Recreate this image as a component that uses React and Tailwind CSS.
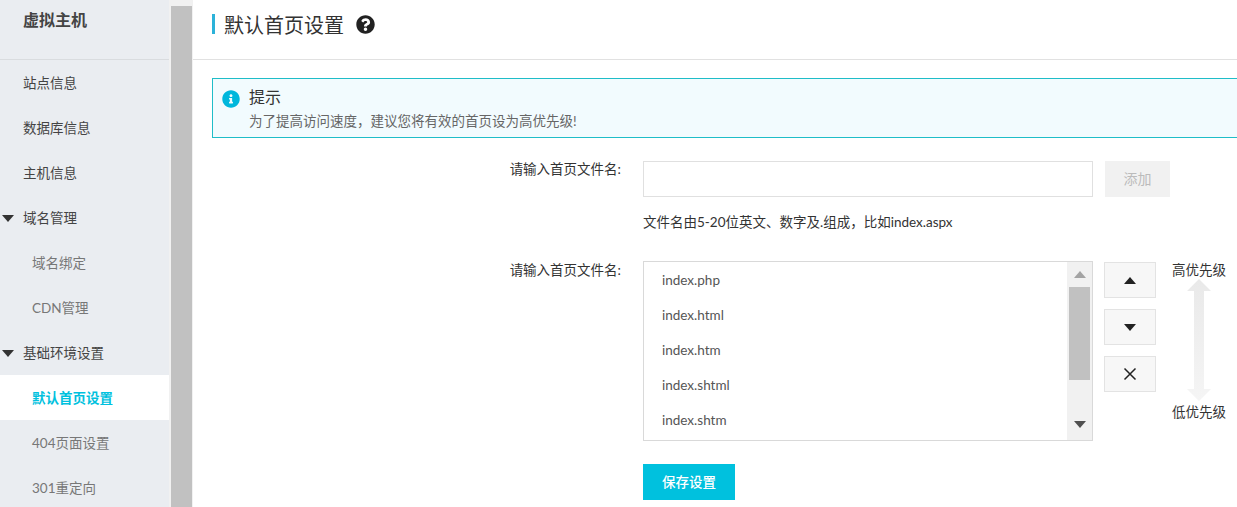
import React from "react";
import { FaInfoCircle, FaQuestionCircle } from "react-icons/fa";

const font = "font-['Lato','Noto_Sans_CJK_SC',sans-serif]";

const Caret = ({ down, className }) => (
  <svg width="12" height="7" viewBox="0 0 12 7" className={className}>
    <polygon points={down ? "0,0 12,0 6,7" : "6,0 12,7 0,7"} fill="currentColor" />
  </svg>
);

const NavItem = ({ label, sub, open, active }) => (
  <div
    className={`flex items-center h-[45px] pt-[2px] text-[13.5px] ${sub ? "pl-[32px]" : "pl-[23px]"} ${
      active ? "bg-white text-[#00c1de] font-semibold" : sub ? "text-[#777]" : "text-[#444]"
    } ${open ? "relative" : ""}`}
  >
    {open && <Caret down className="absolute left-[2px] top-[20px] text-[#333]" />}
    {label}
  </div>
);

const Sidebar = () => (
  <div className="w-[169px] shrink-0 bg-[#eaedf1]">
    <div className="h-[60px] pl-[23px] pt-[8px] border-b border-[#d9dcdf] text-[16px] font-bold text-[#444]">
      虚拟主机
    </div>
    <NavItem label="站点信息" />
    <NavItem label="数据库信息" />
    <NavItem label="主机信息" />
    <NavItem label="域名管理" open />
    <NavItem label="域名绑定" sub />
    <NavItem label="CDN管理" sub />
    <NavItem label="基础环境设置" open />
    <NavItem label="默认首页设置" sub active />
    <NavItem label="404页面设置" sub />
    <NavItem label="301重定向" sub />
  </div>
);

const SideButton = ({ children, className }) => (
  <div className={`w-[52px] h-[36px] flex items-center justify-center bg-[#f7f7f7] border border-[#e3e3e3] text-[#222] ${className}`}>
    {children}
  </div>
);

const files = ["index.php", "index.html", "index.htm", "index.shtml", "index.shtm"];

export default function App() {
  return (
    <div className={`flex h-[507px] w-[1237px] overflow-hidden bg-white text-[#333] text-[13.5px] ${font}`}>
      <Sidebar />
      <div className="w-[24px] shrink-0 bg-[#f1f1f1] pt-[6px] pl-[2px]">
        <div className="w-[21px] h-full bg-[#c1c1c1]" />
      </div>
      <div className="flex-1 min-w-0 overflow-hidden">
        <div className="h-[60px] border-b border-[#e1e1e1] pl-[19px] pt-[14px]">
          <div className="flex items-center h-[20px] border-l-[3px] border-[#2cb2d9] pl-[9px]">
            <span className="block pt-[2px] text-[20px] leading-[20px] text-[#333]">默认首页设置</span>
            <FaQuestionCircle className="ml-[12px] text-[19px] text-[#222]" />
          </div>
        </div>

        <div className="pl-[19px]">
          <div className="mt-[18px] w-[1100px] h-[60px] flex bg-[#f2fbfe] border border-[#1fbdc8] pl-[9px] pt-[9px]">
            <FaInfoCircle className="text-[18px] text-[#00b7dc] mt-[2px]" />
            <div className="ml-[9px]">
              <div className="text-[16px] leading-[18px] text-[#333]">提示</div>
              <div className="mt-[6px] leading-[18px] text-[#666]">
                {"为了提高访问速度\uFF0C建议您将有效的首页设为高优先级!"}
              </div>
            </div>
          </div>

          <div className="flex mt-[23px]">
            <div className="w-[409px] -mt-[1px] text-right leading-[18px]">请输入首页文件名:</div>
            <div className="ml-[22px]">
              <div className="flex">
                <input className="w-[450px] h-[36px] border border-[#e0e0e0] outline-none" />
                <div className="ml-[12px] w-[65px] h-[36px] pb-[2px] flex items-center justify-center bg-[#f1f1f1] text-[14px] text-[#bbb]">
                  添加
                </div>
              </div>
              <div className="mt-[16px] h-[18px] leading-[18px]">{"文件名由5-20位英文、数字及.组成\uFF0C比如index.aspx"}</div>
            </div>
          </div>

          <div className="flex mt-[30px]">
            <div className="w-[409px] text-right leading-[18px]">请输入首页文件名:</div>
            <div className="ml-[22px] flex items-start">
              <div className="w-[450px] h-[180px] flex border border-[#d9d9d9]">
                <div className="flex-1 pl-[18px]">
                  {files.map((f) => (
                    <div key={f} className="h-[35px] flex items-center text-[#555] first:mt-[1px]">
                      {f}
                    </div>
                  ))}
                </div>
                <div className="w-[25px] bg-[#f1f1f1] flex flex-col items-center">
                  <Caret className="mt-[9px] text-[#a3a3a3]" />
                  <div className="mt-[9px] w-[21px] h-[93px] bg-[#c1c1c1]" />
                  <Caret down className="mt-[41px] text-[#505050]" />
                </div>
              </div>
              <div className="ml-[11px] pt-[1px] flex flex-col">
                <SideButton>
                  <Caret />
                </SideButton>
                <SideButton className="mt-[11px]">
                  <Caret down />
                </SideButton>
                <SideButton className="mt-[11px]">
                  <svg width="14" height="14" viewBox="0 0 14 14">
                    <path d="M1.5 1.5 12.5 12.5M12.5 1.5 1.5 12.5" stroke="currentColor" strokeWidth="1.5" fill="none" />
                  </svg>
                </SideButton>
              </div>
              <div className="ml-[16px] w-[54px] flex flex-col items-center text-[13.5px] leading-[18px] text-[#333]">
                <span className="whitespace-nowrap">高优先级</span>
                <svg width="24" height="122" viewBox="0 0 24 122">
                  <defs>
                    <linearGradient id="priorityFade" x1="0" y1="0" x2="0" y2="1">
                      <stop offset="0" stopColor="#e9e9e9" />
                      <stop offset="1" stopColor="#f5f5f5" />
                    </linearGradient>
                  </defs>
                  <path d="M12 0 24 12H17V110H24L12 122 0 110H7V12H0Z" fill="url(#priorityFade)" />
                </svg>
                <span className="whitespace-nowrap mt-[2px]">低优先级</span>
              </div>
            </div>
          </div>

          <div className="ml-[431px] mt-[23px] w-[92px] h-[36px] flex items-center justify-center bg-[#00c1de] text-white text-[13.5px] font-medium">
            保存设置
          </div>
        </div>
      </div>
    </div>
  );
}
